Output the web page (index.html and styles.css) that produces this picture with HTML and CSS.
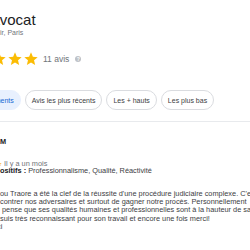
FILE: index.html
```html
<!DOCTYPE html>
<html lang="fr">
<head>
    <meta charset="UTF-8">
    <meta name="viewport" content="width=device-width, initial-scale=1.0">
    <title>Avis - Avocat</title>
    <link rel="stylesheet" href="styles.css">
</head>
<body>

    <div class="panel">
        <h1 class="title">Avocat</h1>
        <div class="subtitle">ir, Paris</div>

        <div class="rating">
            <svg class="star" viewBox="0 0 24 24"><path d="M12 17.27L18.18 21l-1.64-7.03L22 9.24l-7.19-.61L12 2 9.19 8.63 2 9.24l5.46 4.73L5.82 21z"/></svg>
            <svg class="star" viewBox="0 0 24 24"><path d="M12 17.27L18.18 21l-1.64-7.03L22 9.24l-7.19-.61L12 2 9.19 8.63 2 9.24l5.46 4.73L5.82 21z"/></svg>
            <svg class="star" viewBox="0 0 24 24"><path d="M12 17.27L18.18 21l-1.64-7.03L22 9.24l-7.19-.61L12 2 9.19 8.63 2 9.24l5.46 4.73L5.82 21z"/></svg>
            <span class="count">11 avis</span>
            <span class="info">?</span>
        </div>

        <div class="chips">
            <button class="chip selected">Les plus pertinents</button>
            <button class="chip">Avis les plus récents</button>
            <button class="chip">Les + hauts</button>
            <button class="chip">Les plus bas</button>
        </div>

        <div class="divider"></div>

        <div class="review">
            <div class="name">M</div>
            <div class="date"><span class="mini-star">★</span> Il y a un mois</div>
            <div class="tags"><b>Positifs :</b> Professionnalisme, Qualité, Réactivité</div>
            <div class="text">
                <div class="line">ou Traore a été la clef de la réussite d'une procédure judiciaire complexe. C'est</div>
                <div class="line">contrer nos adversaires et surtout de gagner notre procès. Personnellement</div>
                <div class="line shifted">pense que ses qualités humaines et professionnelles sont à la hauteur de sa</div>
                <div class="line">suis très reconnaissant pour son travail et encore une fois merci!</div>
                <div class="line cut">ci</div>
            </div>
        </div>
    </div>

</body>
</html>
```

FILE: styles.css
```css
body {
    margin: 0;
    background-color: #fff;
    font-family: "Liberation Sans", Arial, sans-serif;
    overflow: hidden;
}

.panel {
    width: 250px;
    overflow: hidden;
}

.title {
    margin: 11px 0 0 -10px;
    font-size: 15px;
    line-height: 18px;
    font-weight: normal;
    color: #202124;
}

.subtitle {
    font-size: 7px;
    line-height: 8px;
    color: #70757a;
}

.rating {
    display: flex;
    align-items: center;
    height: 16px;
    margin: 14px 0 0 -9px;
}

.star {
    width: 16px;
    height: 16px;
    fill: #fbbc04;
    flex: none;
}

.count {
    margin-left: 4px;
    font-size: 8.5px;
    color: #70757a;
}

.info {
    width: 6px;
    height: 6px;
    margin-left: 6px;
    border-radius: 50%;
    background-color: #bdc1c6;
    color: #fff;
    font-size: 5px;
    line-height: 6px;
    text-align: center;
    font-weight: bold;
}

.chips {
    display: flex;
    gap: 4px;
    margin: 23px 0 0 -52px;
}

.chip {
    flex: none;
    height: 20px;
    padding: 0 6px;
    border: 1px solid #dadce0;
    border-radius: 10px;
    background-color: #fff;
    font-family: inherit;
    font-size: 7px;
    color: #3c4043;
    white-space: nowrap;
}

.chip.selected {
    background-color: #e8f0fe;
    border-color: #e8f0fe;
    color: #1967d2;
}

.divider {
    margin-top: 11px;
    border-top: 1px solid #e8eaed;
}

.review {
    padding-top: 14.5px;
    color: #3c4043;
    font-size: 7.35px;
}

.name {
    line-height: 9px;
    font-weight: bold;
    color: #202124;
}

.date {
    margin: 14.5px 0 0 -4px;
    line-height: 7px;
    color: #70757a;
    white-space: nowrap;
}

.mini-star {
    color: #fbbc04;
}

.tags {
    line-height: 8px;
    margin-left: -4.9px;
    white-space: nowrap;
}

.tags b {
    color: #202124;
}

.text {
    margin-top: 14.7px;
    line-height: 8.33px;
}

.line {
    white-space: nowrap;
}

.line.shifted {
    padding-left: 2px;
}

.line.cut {
    margin-left: -3px;
}
```
